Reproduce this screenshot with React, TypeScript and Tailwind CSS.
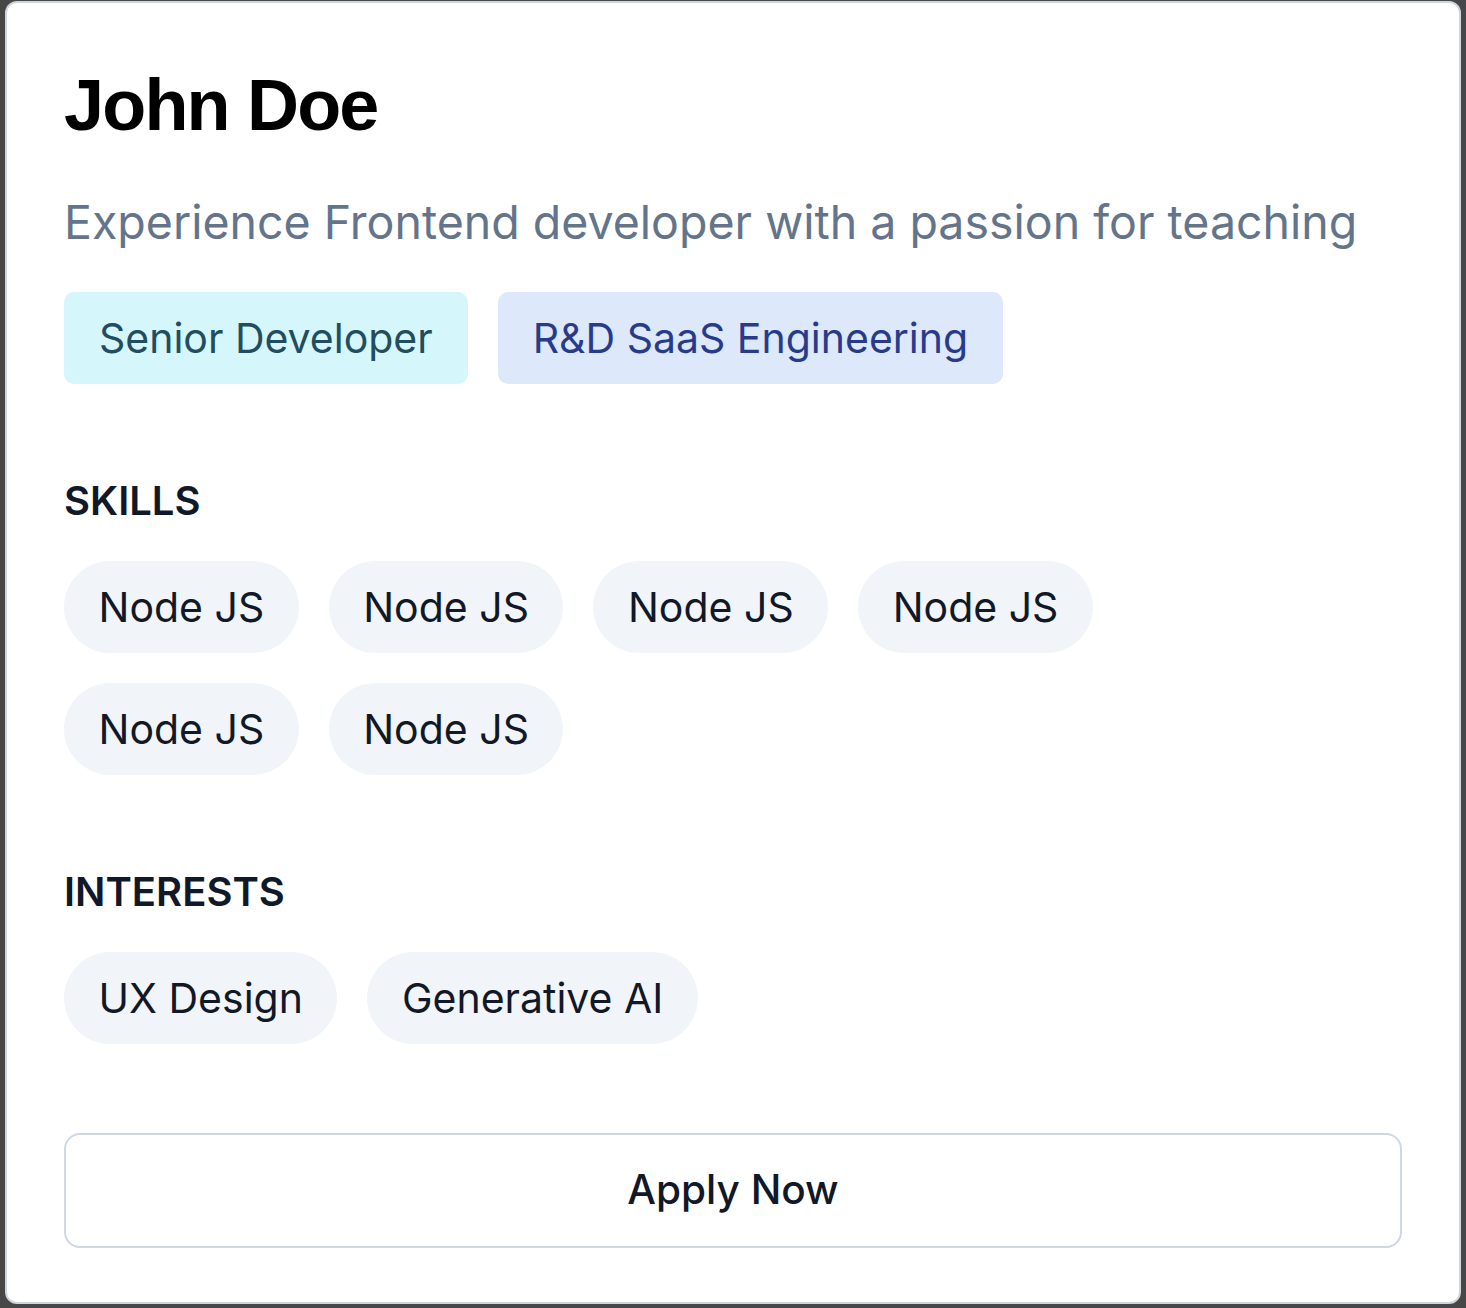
import React from 'react';

const skills = ['Node JS', 'Node JS', 'Node JS', 'Node JS', 'Node JS', 'Node JS'];
const interests = ['UX Design', 'Generative AI'];

const Chip: React.FC<{ label: string }> = ({ label }) => (
  <span className="inline-flex h-[92px] items-center rounded-full bg-[#f1f5f9] px-[34.5px] text-[41px] leading-none text-[#111827]">
    {label}
  </span>
);

const Section: React.FC<{ title: string; items: string[] }> = ({ title, items }) => (
  <div>
    <h3 className="text-[40px] leading-[67px] font-semibold text-[#111827]">{title}</h3>
    <div className="mt-[27px] flex max-w-[1200px] flex-wrap gap-x-[30px] gap-y-[30px]">
      {items.map((item, i) => (
        <Chip key={i} label={item} />
      ))}
    </div>
  </div>
);

const App: React.FC = () => {
  return (
    <div className="min-h-screen bg-[#474747] pl-[5px] pr-[5px] pt-[1px] pb-[5px] font-['Inter','Noto_Sans',sans-serif]">
      <div className="flex flex-col rounded-[12px] border-2 border-[#cfd6e0] bg-white px-[57px] pt-[59px] pb-[54px]">
        <h1 className="font-['Liberation_Sans','Arial',sans-serif] text-[72px] leading-[86px] font-bold tracking-tight text-black">
          John Doe
        </h1>
        <p className="mt-[41px] text-[46.5px] leading-[67px] text-[#64748b]">
          Experience Frontend developer with a passion for teaching
        </p>
        <div className="mt-[36px] flex gap-[30px]">
          <span className="inline-flex h-[92px] items-center rounded-[10px] bg-[#d5f7fc] px-[35px] text-[41px] leading-none text-[#224c5f]">
            Senior Developer
          </span>
          <span className="inline-flex h-[92px] items-center rounded-[10px] bg-[#dde8fb] px-[35px] text-[41px] leading-none text-[#273b8a]">
            R&amp;D SaaS Engineering
          </span>
        </div>
        <div className="mt-[83px]">
          <Section title="SKILLS" items={skills} />
        </div>
        <div className="mt-[83px]">
          <Section title="INTERESTS" items={interests} />
        </div>
        <button className="mt-[89px] h-[115px] w-full rounded-[16px] border-2 border-[#cfd7e3] bg-white text-[40.5px] font-medium text-[#111827]">
          Apply Now
        </button>
      </div>
    </div>
  );
};

export default App;
